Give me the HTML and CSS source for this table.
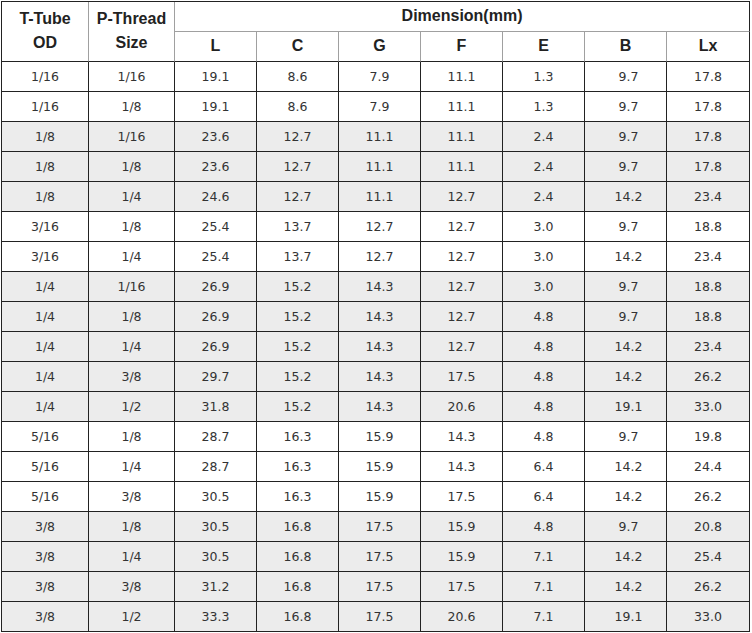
FILE: index.html
```html
<!DOCTYPE html>
<html>
<head>
<meta charset="utf-8">
<link rel="stylesheet" href="styles.css">
</head>
<body>
<table class="spec">
  <colgroup>
    <col class="c-od"><col class="c-pt"><col class="c-d"><col class="c-d"><col class="c-d"><col class="c-d"><col class="c-d"><col class="c-d"><col class="c-lx">
  </colgroup>
  <thead>
    <tr>
      <th rowspan="2" class="bot">T-Tube<br>OD</th>
      <th rowspan="2" class="bot">P-Thread<br>Size</th>
      <th colspan="7" class="last">Dimension(mm)</th>
    </tr>
    <tr>
      <th class="bot">L</th><th class="bot">C</th><th class="bot">G</th><th class="bot">F</th><th class="bot">E</th><th class="bot">B</th><th class="bot last">Lx</th>
    </tr>
  </thead>
  <tbody>
    <tr><td>1/16</td><td>1/16</td><td>19.1</td><td>8.6</td><td>7.9</td><td>11.1</td><td>1.3</td><td class="b">9.7</td><td>17.8</td></tr>
    <tr><td>1/16</td><td>1/8</td><td>19.1</td><td>8.6</td><td>7.9</td><td>11.1</td><td>1.3</td><td class="b">9.7</td><td>17.8</td></tr>
    <tr class="alt"><td>1/8</td><td>1/16</td><td>23.6</td><td>12.7</td><td>11.1</td><td>11.1</td><td>2.4</td><td class="b">9.7</td><td>17.8</td></tr>
    <tr class="alt"><td>1/8</td><td>1/8</td><td>23.6</td><td>12.7</td><td>11.1</td><td>11.1</td><td>2.4</td><td class="b">9.7</td><td>17.8</td></tr>
    <tr class="alt"><td>1/8</td><td>1/4</td><td>24.6</td><td>12.7</td><td>11.1</td><td>12.7</td><td>2.4</td><td class="b">14.2</td><td>23.4</td></tr>
    <tr><td>3/16</td><td>1/8</td><td>25.4</td><td>13.7</td><td>12.7</td><td>12.7</td><td>3.0</td><td class="b">9.7</td><td>18.8</td></tr>
    <tr><td>3/16</td><td>1/4</td><td>25.4</td><td>13.7</td><td>12.7</td><td>12.7</td><td>3.0</td><td class="b">14.2</td><td>23.4</td></tr>
    <tr class="alt"><td>1/4</td><td>1/16</td><td>26.9</td><td>15.2</td><td>14.3</td><td>12.7</td><td>3.0</td><td class="b">9.7</td><td>18.8</td></tr>
    <tr class="alt"><td>1/4</td><td>1/8</td><td>26.9</td><td>15.2</td><td>14.3</td><td>12.7</td><td>4.8</td><td class="b">9.7</td><td>18.8</td></tr>
    <tr class="alt"><td>1/4</td><td>1/4</td><td>26.9</td><td>15.2</td><td>14.3</td><td>12.7</td><td>4.8</td><td class="b">14.2</td><td>23.4</td></tr>
    <tr class="alt"><td>1/4</td><td>3/8</td><td>29.7</td><td>15.2</td><td>14.3</td><td>17.5</td><td>4.8</td><td class="b">14.2</td><td>26.2</td></tr>
    <tr class="alt"><td>1/4</td><td>1/2</td><td>31.8</td><td>15.2</td><td>14.3</td><td>20.6</td><td>4.8</td><td class="b">19.1</td><td>33.0</td></tr>
    <tr><td>5/16</td><td>1/8</td><td>28.7</td><td>16.3</td><td>15.9</td><td>14.3</td><td>4.8</td><td class="b">9.7</td><td>19.8</td></tr>
    <tr><td>5/16</td><td>1/4</td><td>28.7</td><td>16.3</td><td>15.9</td><td>14.3</td><td>6.4</td><td class="b">14.2</td><td>24.4</td></tr>
    <tr><td>5/16</td><td>3/8</td><td>30.5</td><td>16.3</td><td>15.9</td><td>17.5</td><td>6.4</td><td class="b">14.2</td><td>26.2</td></tr>
    <tr class="alt"><td>3/8</td><td>1/8</td><td>30.5</td><td>16.8</td><td>17.5</td><td>15.9</td><td>4.8</td><td class="b">9.7</td><td>20.8</td></tr>
    <tr class="alt"><td>3/8</td><td>1/4</td><td>30.5</td><td>16.8</td><td>17.5</td><td>15.9</td><td>7.1</td><td class="b">14.2</td><td>25.4</td></tr>
    <tr class="alt"><td>3/8</td><td>3/8</td><td>31.2</td><td>16.8</td><td>17.5</td><td>17.5</td><td>7.1</td><td class="b">14.2</td><td>26.2</td></tr>
    <tr class="alt"><td>3/8</td><td>1/2</td><td>33.3</td><td>16.8</td><td>17.5</td><td>20.6</td><td>7.1</td><td class="b">19.1</td><td>33.0</td></tr>
  </tbody>
</table>
</body>
</html>
```
FILE: styles.css
```css
html, body {
  margin: 0;
  padding: 0;
  background: #ffffff;
}
body {
  padding: 1px 0 0 1px;
}
.spec {
  border-collapse: separate;
  border-spacing: 0;
  table-layout: fixed;
  width: 749px;
  border-top: 1px solid #222222;
  border-left: 1px solid #222222;
  font-family: "DejaVu Sans", Verdana, sans-serif;
  font-size: 12.5px;
  color: #333333;
}
.c-od { width: 87px; }
.c-pt { width: 86px; }
.c-d { width: 82px; }
.c-lx { width: 83px; }
.spec tr {
  height: 30px;
}
.spec th {
  font-family: "Liberation Sans", Arial, sans-serif;
  font-weight: bold;
  font-size: 16px;
  color: #222222;
  line-height: 24px;
  padding: 0 0 1px 0;
  text-align: center;
  vertical-align: middle;
  border-right: 1px solid #a0a0a0;
  border-bottom: 1px solid #a0a0a0;
}
.spec th.bot {
  border-bottom-color: #222222;
}
.spec th.last {
  border-right-color: #222222;
}
.spec td {
  padding: 0 0 1px 0;
  text-align: center;
  vertical-align: middle;
  border-right: 1px solid #222222;
  border-bottom: 1px solid #222222;
}
.spec td.b {
  padding-left: 6px;
}
.spec tr.alt td {
  background: #ececec;
}
```
